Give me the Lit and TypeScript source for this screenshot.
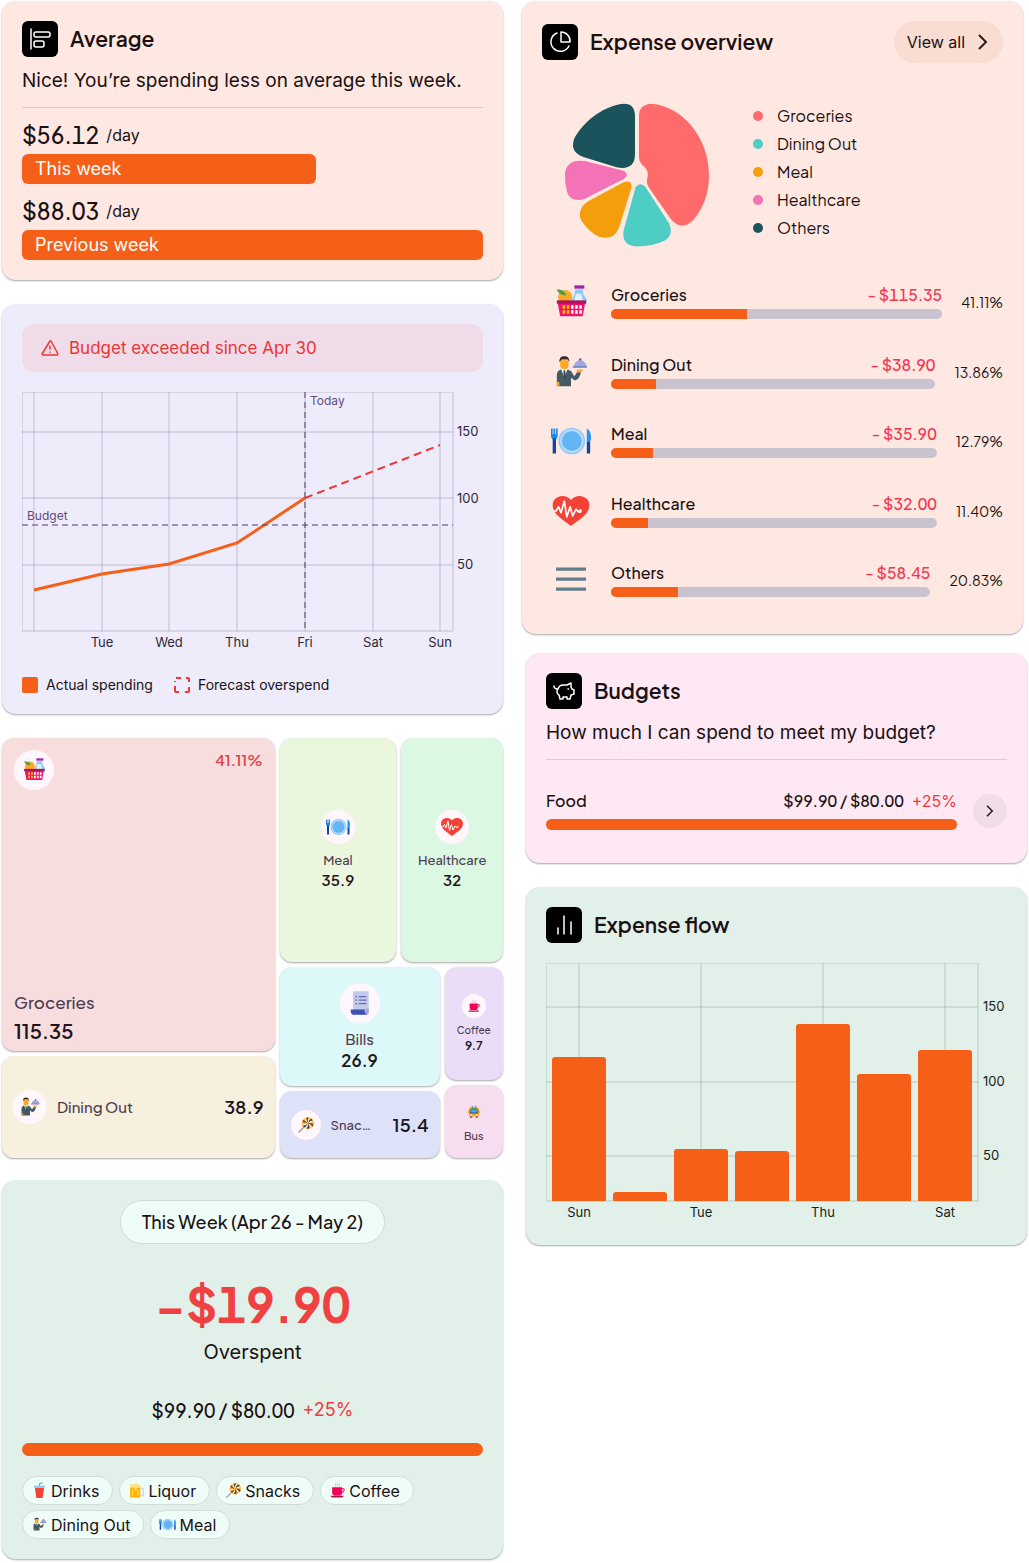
import { css, html, LitElement, svg } from "lit";
import { customElement, property, state } from "lit/decorators.js";
import { map } from "lit/directives/map.js";
import { styleMap } from "lit/directives/style-map.js";

const icons: Record<string, any> = {
  groceries: svg`
    <path fill="#90caf9" d="M29 9h9l1 6 4 6v5H25v-5l3-6z"/>
    <path fill="#e3f2fd" d="M30 14h6l3 11H27z"/>
    <path fill="#9c27b0" d="M28 4h12v4H28z"/>
    <circle cx="17" cy="18" r="8.500" fill="#ffa726"/>
    <path fill="#43a047" d="M7 9c6 0 10 2 11 7-5 0-9-2-11-7z"/>
    <path fill="#f0146a" d="M8 25h33l-3 16H11z"/>
    <path fill="#ad1457" d="M7 22h35v4H7z"/>
    <path fill="#ffc107" d="M14 28h3v4h-3zM19 28h3v4h-3zM14 34h3v4h-3zM19 34h3v4h-3z"/>
    <path fill="#fff" d="M24 28h3v4h-3zM29 28h3v4h-3zM34 28h3v4h-3zM24 34h3v4h-3zM29 34h3v4h-3zM34 34h3v4h-3z"/>`,
  dining: svg`
    <path fill="#455a64" d="M7 41V28c0-4 2-6 5-7h8c3 1 5 2 6 5l2 3 4-6 4 2c-2 6-4 9-8 9l-4-3v10z"/>
    <path fill="#fff" d="M12 20h8l-4 11z"/>
    <path fill="#37474f" d="M15 22h2l1 8-2 3-1-3z"/>
    <path fill="#ffa726" d="M11 10h10v6c0 3-2 5-5 5s-5-2-5-5zM7 36h3v5H7zM31 21h8l-3 3-5 1z"/>
    <path fill="#3e2723" d="M10 12c0-5 2-7 6-7s6 2 6 7l-2-3h-7z"/>
    <path fill="#9fa8da" d="M27 18c1-5 4-8 8-8s7 3 8 8z"/>
    <circle cx="35" cy="9" r="1.500" fill="#5c6bc0"/>
    <path fill="#7986cb" d="M26 17h17v2H26z"/>`,
  meal: svg`
    <circle cx="25" cy="24" r="16" fill="#90caf9"/>
    <circle cx="25" cy="24" r="14" fill="#bbdefb"/>
    <circle cx="25" cy="24" r="12" fill="#64b5f6"/>
    <path fill="#1e88e5" d="M0 9h2v7h1V9h2v7h1V9h2v9c0 2-1 3-2 4H2c-1-1-2-2-2-4z"/>
    <path fill="#0d47a1" d="M2 21h4v18H2z"/>
    <path fill="#2196f3" d="M43 9c4 2 5 7 5 11 0 3-1 5-2 6h-3z"/>
    <path fill="#0d47a1" d="M43 25h4v14h-4z"/>`,
  health: svg`
    <path fill="#f44336" d="M24 42C12 33 2 27 2 17 2 6 17 2 24 11 31 2 46 6 46 17c0 10-10 16-22 25z"/>
    <path fill="none" stroke="#fff" stroke-width="2" stroke-linejoin="round" d="M3 24h3l3-5 3 7 4-14 3 19 4-12 3 11 4-8 3 3h3"/>
    <circle cx="35" cy="24" r="2" fill="#fff"/>`,
  others: svg`<path fill="#607d8b" d="M6 9h36v4H6zM6 21h36v4H6zM6 33h36v4H6z"/>`,
  bills: svg`
    <path fill="#c5cae9" d="M12 4h27v36c0 2-2 4-5 4H12z"/>
    <path fill="#9fa8da" d="M33 34h6v5c0 3-1 5-4 5z"/>
    <path fill="#3f51b5" d="M8 35h24c0 4 1 7 4 9H13c-4 0-5-4-5-9z"/>
    <path fill="#5c6bc0" d="M16 12h3v2h-3zM16 18h3v2h-3zM16 24h3v2h-3zM22 12h13v2H22zM22 18h13v2H22zM22 24h13v2H22z"/>`,
  coffee: svg`
    <path fill="none" stroke="#bcaaa4" stroke-width="2" d="M18 4c3 3-2 5 0 9M24 4c3 3-2 5 0 9M30 4c3 3-2 5 0 9"/>
    <path fill="#f50057" d="M9 15h28v15c0 5-3 8-8 8H17c-5 0-8-3-8-8z"/>
    <path fill="none" stroke="#f50057" stroke-width="3" d="M36 19h5c3 0 3 9-6 11"/>
    <path fill="#ad1457" d="M4 39h38c-1 3-4 5-7 5H11c-3 0-6-2-7-5z"/>`,
  snacks: svg`
    <path stroke="#a1887f" stroke-width="3" d="M4 44l18-18"/>
    <circle cx="29" cy="19" r="16" fill="#ffa726"/>
    <path fill="#37474f" d="M29 19q-5-6-3-15l5 0q-4 8-2 15zM29 19q1-8 9-12l4 4q-9 1-13 8zM29 19q8-2 15 4l-3 5q-4-7-12-9zM29 19q5 5 3 14l-6 1q4-7 3-15zM29 19q-2 7-9 11l-4-4q8-1 13-7zM29 19q-7 0-14-5l3-4q4 7 11 9z"/>
    <path fill="#fff" d="M29 19q-2-7 3-15l2 1zM29 19q6-6 14-6l1 2zM29 19q8 3 11 10l-2 2zM29 19q1 8-5 14l-2-1zM29 19q-6 5-13 5l-1-2zM29 19q-6-4-9-11l2-2z"/>`,
  bus: svg`
    <path stroke="#546e7a" stroke-width="3" d="M17 2l3 8M31 2l-3 8"/>
    <path fill="#ffa726" d="M7 14c0-4 3-6 6-6h22c3 0 6 2 6 6v25H7zM3 18h4v10H3zM41 18h4v10h-4z"/>
    <path fill="#37474f" d="M11 39h7v5h-7zM30 39h7v5h-7zM10 15h28v14H10z"/>
    <path fill="#43a047" d="M15 9h18v5H15z"/>
    <path fill="#42a5f5" d="M12 17h24v9H12z"/>
    <circle cx="14" cy="34" r="2.500" fill="#fff"/><circle cx="34" cy="34" r="2.500" fill="#fff"/>`,
  drinks: svg`
    <path fill="none" stroke="#42a5f5" stroke-width="3" d="M24 12V5l9-3"/>
    <path fill="#90caf9" d="M9 10h30v7H9z"/>
    <path fill="#f44336" d="M11 17h26l-4 28H15z"/>`,
  liquor: svg`
    <path fill="none" stroke="#bbdefb" stroke-width="4" d="M35 18h8v20h-8"/>
    <path fill="#ffb300" d="M6 12h29v32H6z"/>
    <path fill="#ffe082" d="M5 13C4 6 12 3 16 6c5-4 11-2 12 1 6-1 9 3 7 9H24v8h-5v-8H5z"/>
    <path fill="#ffd54f" d="M11 22h4v17h-4zM26 22h4v17h-4z"/>`,
};

const badges: Record<string, any> = {
  average: svg`<path d="M9 8v20"/><rect x="12" y="11" width="16" height="5" rx="2"/><rect x="12" y="20" width="10" height="6" rx="2"/>`,
  pie: svg`<path d="M15 9a9.500 9.500 0 1 0 12 13"/><path d="M19 8v10h9A9 9 0 0 0 19 8z"/>`,
  piggy: svg`<path d="M8 13c0 2 1 3 4 3 1-3 3-4 5-4h4l4-2v4l1 2 2 1v4l-3 1-1 4h-3v-2h-4v2h-3l-1-4c-2-1-3-4-1-6M22 16h.500"/>`,
  bars: svg`<path d="M12 21v6M18 9v18M25 15v12"/>`,
};

const icon = (name: string) =>
  html`<svg class="icon" viewBox="0 0 48 48" aria-hidden="true">${icons[name]}</svg>`;

const badge = (name: string) =>
  html`<svg class="badge" viewBox="0 0 36 36" aria-hidden="true">${badges[name]}</svg>`;

const chevron = html`<svg class="chevron" viewBox="0 0 16 16" aria-hidden="true"><path d="M4 1l7 7-7 7" /></svg>`;

@customElement("spending-chart")
export class SpendingChart extends LitElement {
  static styles = css`
    :host {
      display: block;
    }
    svg {
      display: block;
      width: 100%;
      height: auto;
      font-family: Inter, sans-serif;
      font-size: 13px;
      fill: #2c2839;
    }
    .grid {
      fill: none;
      stroke: #26203a;
      stroke-opacity: 0.22;
    }
    .marker {
      fill: none;
      stroke: #4f3a70;
      stroke-dasharray: 6 4;
    }
    .note {
      font-size: 12px;
      fill: #5e4b80;
    }
    .actual {
      fill: none;
      stroke: #f65f18;
      stroke-width: 3;
    }
    .forecast {
      fill: none;
      stroke: #ef3535;
      stroke-width: 2;
      stroke-dasharray: 8 5;
    }
    .mid {
      text-anchor: middle;
    }
  `;

  private _days = ["", "Tue", "Wed", "Thu", "Fri", "Sat", "Sun"];

  render() {
    return html`
      <svg viewBox="0 0 461 264" role="img" aria-label="Spending this week">
        <rect class="grid" x="0" y="0" width="431" height="239" />
        <path class="grid" d="M0 40H431M0 106H431M0 173H431" />
        ${map(this._days, (day, i) => {
          const x = 12 + Math.round(i * 67.7);
          return svg`
            <path class="grid" d="M${x} 0V239"/>
            <text class="mid" x=${x} y="255">${day}</text>`;
        })}
        <path class="actual" d="M12 198L80 182 147 172 215 151 283 106" />
        <path class="forecast" d="M283 106L418 53" />
        <path class="marker" d="M0 133H431M283 0V239" />
        <text class="note" x="288" y="13">Today</text>
        <text class="note" x="5" y="128">Budget</text>
        <text x="435" y="44">150</text>
        <text x="435" y="111">100</text>
        <text x="435" y="177">50</text>
      </svg>
    `;
  }
}

@customElement("flow-chart")
export class FlowChart extends LitElement {
  static styles = css`
    :host {
      display: block;
    }
    svg {
      display: block;
      width: 100%;
      height: auto;
      font-family: Inter, sans-serif;
      font-size: 13px;
      fill: #16211d;
    }
    .grid {
      fill: none;
      stroke: #123024;
      stroke-opacity: 0.2;
    }
    .bar {
      fill: #f65f18;
    }
    .mid {
      text-anchor: middle;
    }
  `;

  @property({ type: Array }) heights = [144, 9, 52, 50, 177, 127, 151];

  private _days = ["Sun", "Tue", "Thu", "Sat"];

  render() {
    return html`
      <svg viewBox="0 0 461 262" role="img" aria-label="Expenses by day">
        <rect class="grid" x="0" y="0" width="432" height="238" />
        <path class="grid" d="M0 44H432M0 119H432M0 193H432" />
        ${map(
          this._days,
          (day, i) => svg`
            <path class="grid" d="M${33 + i * 122} 0V238"/>
            <text class="mid" x=${33 + i * 122} y="254">${day}</text>`
        )}
        ${map(this.heights, (h, i) => {
          const x = 6 + i * 61;
          return svg`<path class="bar" d="M${x} 238V${241 - h}q0-3 3-3h48q3 0 3 3V238z"/>`;
        })}
        <text x="437" y="48">150</text>
        <text x="437" y="123">100</text>
        <text x="437" y="197">50</text>
      </svg>
    `;
  }
}

@customElement("app-root")
export class AppRoot extends LitElement {
  static styles = css`
    :host {
      display: block;
      background: #fff;
      color: #1a1112;
      font-family: "Plus Jakarta Sans", Inter, sans-serif;
      font-size: 16px;
      line-height: 20px;
    }
    * {
      box-sizing: border-box;
    }
    h2,
    p,
    ul {
      margin: 0;
      padding: 0;
    }
    ul {
      list-style: none;
    }
    button {
      border: 0;
      padding: 0;
      font: inherit;
      color: inherit;
      cursor: pointer;
    }
    svg {
      display: block;
      flex: none;
    }
    .lead,
    .rate,
    .week,
    .alert,
    .keys,
    .state,
    .over,
    .chip,
    .all {
      font-family: Inter, sans-serif;
    }
    .page {
      display: grid;
      grid-template-columns: 501fr 505fr;
      gap: 19px;
      align-items: start;
      padding: 1px 2px 4px;
    }
    .column {
      display: flex;
      flex-direction: column;
      min-width: 0;
    }
    .card {
      border-radius: 14px;
      padding: 20px;
      box-shadow: 0 1px 2px rgba(0, 0, 0, 0.35);
    }
    .card + .card,
    .treemap {
      margin-top: 24px;
    }
    .peach {
      background: #ffe8e2;
    }
    .lilac {
      background: #eeecfb;
    }
    .pink {
      background: #fee8f3;
    }
    .mint {
      background: #e2f0ea;
    }
    .head {
      display: flex;
      align-items: center;
      gap: 12px;
    }
    .head h2 {
      flex: 1;
      font-size: 21px;
      line-height: 28px;
      font-weight: 600;
    }
    .badge {
      width: 36px;
      height: 36px;
      border-radius: 6px;
      background: #000;
      fill: none;
      stroke: #fff;
      stroke-width: 1.5;
      stroke-linecap: round;
      stroke-linejoin: round;
    }
    .icon {
      width: 40px;
      height: 40px;
    }
    .chevron {
      width: 16px;
      height: 16px;
      fill: none;
      stroke: #2a1a18;
      stroke-width: 2;
    }
    .lead {
      margin-top: 12px;
      padding-bottom: 14px;
      border-bottom: 1px solid rgba(60, 50, 70, 0.16);
      font-size: 19px;
      line-height: 24px;
    }
    .rate {
      display: flex;
      align-items: center;
      gap: 7px;
      height: 30px;
      margin-top: 12px;
      font-size: 16px;
    }
    .rate b {
      font-family: "Plus Jakarta Sans", Inter, sans-serif;
      font-size: 23px;
      font-weight: 500;
      font-variant-numeric: tabular-nums;
    }
    .week {
      margin-top: 4px;
      padding-left: 13px;
      border-radius: 6px;
      background: #f65f18;
      color: #fff;
      font-size: 18px;
      line-height: 30px;
    }
    .alert {
      display: flex;
      align-items: center;
      gap: 9px;
      margin-bottom: 20px;
      padding: 12px 18px;
      border-radius: 12px;
      background: #efdce8;
      color: #ee3434;
      font-size: 17px;
      line-height: 24px;
    }
    .alert svg {
      width: 20px;
      height: 20px;
      fill: none;
      stroke: currentColor;
      stroke-width: 1.5;
      stroke-linecap: round;
      stroke-linejoin: round;
    }
    .keys {
      display: flex;
      gap: 21px;
      margin-top: 20px;
      font-size: 14px;
      line-height: 18px;
    }
    .keys li {
      display: flex;
      align-items: center;
      gap: 8px;
    }
    .keys svg {
      width: 16px;
      height: 16px;
    }
    .treemap {
      height: 420px;
      grid-template-columns: 272fr 223fr;
    }
    .treemap,
    .split {
      display: grid;
      gap: 5px;
      min-width: 0;
      min-height: 0;
    }
    .left {
      grid-template-rows: 313fr 102fr;
    }
    .right {
      grid-template-rows: 224fr 191fr;
    }
    .top {
      grid-template-columns: 116fr 101fr;
    }
    .bottom {
      grid-template-columns: 159fr 58fr;
    }
    .bottom-left {
      grid-template-rows: 119fr 67fr;
    }
    .bottom-right {
      grid-template-rows: 113fr 73fr;
    }
    .tile {
      display: flex;
      flex-direction: column;
      align-items: center;
      justify-content: center;
      min-width: 0;
      min-height: 0;
      padding: 0 11px;
      border-radius: 12px;
      box-shadow: 0 1px 2px rgba(0, 0, 0, 0.35);
      color: #4c3c50;
      font-size: 13px;
      font-weight: 500;
      text-align: center;
    }
    .tile b {
      color: #1d1620;
      font-weight: 600;
      font-size: 15px;
    }
    .tile.wide {
      flex-direction: row;
      justify-content: flex-start;
      gap: 10px;
      font-size: 15px;
    }
    .name {
      flex: 1;
      text-align: left;
      overflow: hidden;
      text-overflow: ellipsis;
      white-space: nowrap;
    }
    .wide b {
      font-size: 18px;
    }
    .tile.snack {
      font-size: 13px;
    }
    .snack .name {
      margin-right: 10px;
    }
    .disc {
      display: grid;
      place-items: center;
      flex: none;
      width: 34px;
      height: 34px;
      border-radius: 50%;
      background: #fff7fb;
      margin-bottom: 6px;
    }
    .disc .icon {
      width: 24px;
      height: 24px;
    }
    .wide .disc {
      margin-bottom: 0;
    }
    .large {
      width: 40px;
      height: 40px;
    }
    .large .icon {
      width: 28px;
      height: 28px;
    }
    .small {
      width: 24px;
      height: 24px;
      margin-bottom: 4px;
    }
    .small .icon {
      width: 14px;
      height: 14px;
    }
    .snack .disc {
      width: 30px;
      height: 30px;
    }
    .snack .icon {
      width: 18px;
      height: 18px;
    }
    .tile.hero {
      align-items: stretch;
      justify-content: space-between;
      padding: 12px 12px 5px;
      text-align: left;
      font-size: 17px;
      line-height: 28px;
    }
    .hero div {
      display: flex;
      justify-content: space-between;
    }
    .hero em {
      color: #dc4646;
      font-style: normal;
      font-size: 15px;
      font-weight: 600;
      line-height: 20px;
    }
    .hero b {
      display: block;
      font-size: 20px;
      line-height: 30px;
    }
    .tile.bill {
      font-size: 15px;
    }
    .bill b {
      font-size: 17px;
      line-height: 22px;
    }
    .tile.tiny {
      padding: 0 4px;
      font-size: 10px;
      line-height: 16px;
    }
    .tiny b {
      font-size: 12px;
    }
    .tile.bus {
      font-size: 11px;
    }
    .bus .disc {
      background: none;
    }
    .card.summary {
      display: flex;
      flex-direction: column;
      align-items: center;
      margin-top: 22px;
    }
    .period {
      height: 44px;
      padding: 0 21px;
      border: 1px solid #cfdcda;
      border-radius: 22px;
      background: #effdf9;
      font-size: 18px;
      font-weight: 500;
    }
    .total {
      margin-top: 28px;
      color: #f04142;
      font-size: 48px;
      line-height: 64px;
      font-weight: 700;
      font-variant-numeric: tabular-nums;
    }
    .state {
      margin-top: 4px;
      font-size: 20px;
      line-height: 24px;
    }
    .spent {
      display: flex;
      gap: 4px;
      margin-top: 34px;
      font-size: 19px;
      line-height: 24px;
    }
    .spent,
    .budget p {
      font-variant-numeric: tabular-nums;
      font-weight: 500;
    }
    .over {
      margin-left: 4px;
      color: #ef3b3f;
      font-weight: 400;
      font-variant-numeric: normal;
    }
    .spent .over {
      font-size: 18px;
    }
    .fill {
      align-self: stretch;
      height: 13px;
      margin-top: 21px;
      border-radius: 7px;
      background: #f65f18;
    }
    .chips {
      align-self: stretch;
      display: flex;
      flex-wrap: wrap;
      gap: 5px 6px;
      margin-top: 20px;
    }
    .chip {
      display: flex;
      align-items: center;
      gap: 3px;
      height: 29px;
      padding: 0 13px 0 8px;
      border: 1px solid #cfdcda;
      border-radius: 15px;
      background: #effdf9;
      font-size: 16px;
    }
    .chip .icon {
      width: 17px;
      height: 17px;
    }
    .overview {
      margin-right: 4px;
      padding-bottom: 34px;
    }
    .card.budgets {
      margin-top: 19px;
      padding-bottom: 33px;
    }
    .budgets,
    .flow {
      margin-left: 4px;
    }
    .all {
      display: flex;
      align-items: center;
      gap: 10px;
      height: 42px;
      padding: 0 12px 0 13px;
      border-radius: 21px;
      background: #f9ddd2;
    }
    .share {
      display: flex;
      gap: 42px;
      margin-top: 37px;
      padding-left: 21px;
    }
    .share svg {
      width: 148px;
      height: 148px;
    }
    .share li {
      display: flex;
      align-items: center;
      gap: 14px;
      line-height: 28px;
    }
    .share ul {
      padding-top: 2px;
    }
    .dot {
      width: 10px;
      height: 10px;
      border-radius: 50%;
    }
    .list {
      display: flex;
      flex-direction: column;
      justify-content: space-between;
      height: 318px;
      margin-top: 34px;
      padding-left: 9px;
    }
    .list li {
      display: flex;
      align-items: center;
    }
    .usage {
      flex: 1;
      margin: 0 19px 0 20px;
    }
    .names {
      display: flex;
      justify-content: space-between;
      margin-bottom: 4px;
      font-weight: 500;
    }
    .names span:last-child {
      color: #f4364f;
      font-variant-numeric: tabular-nums;
    }
    .track {
      height: 10px;
      border-radius: 5px;
      overflow: hidden;
      background: #c9c3d0;
    }
    .track div {
      height: 100%;
      background: #f65f18;
    }
    .percent {
      font-size: 14px;
    }
    .budget {
      display: flex;
      align-items: center;
      gap: 16px;
      margin-top: 31px;
    }
    .budget > div {
      flex: 1;
    }
    .budget p {
      display: flex;
      gap: 4px;
    }
    .budget p span:first-child {
      flex: 1;
    }
    .budget .fill {
      height: 11px;
      margin-top: 8px;
    }
    .next {
      display: grid;
      place-items: center;
      width: 34px;
      height: 34px;
      border-radius: 50%;
      background: #f0dde8;
    }
    .next .chevron {
      width: 12px;
      height: 12px;
    }
    .flow flow-chart {
      margin-top: 20px;
    }
  `;

  @state()
  private _categories = [
    { name: "Groceries", icon: "groceries", color: "#ff6b6b", amount: "115.35", share: 41.11 },
    { name: "Dining Out", icon: "dining", color: "#4ecdc4", amount: "38.90", share: 13.86 },
    { name: "Meal", icon: "meal", color: "#f59e0b", amount: "35.90", share: 12.79 },
    { name: "Healthcare", icon: "health", color: "#f472b6", amount: "32.00", share: 11.4 },
    { name: "Others", icon: "others", color: "#1a535c", amount: "58.45", share: 20.83 },
  ];

  private _chips = [
    ["drinks", "Drinks"],
    ["liquor", "Liquor"],
    ["snacks", "Snacks"],
    ["coffee", "Coffee"],
    ["dining", "Dining Out"],
    ["meal", "Meal"],
  ];

  private _weeks = [
    { label: "This week", amount: "$56.12", width: 63.75 },
    { label: "Previous week", amount: "$88.03", width: 100 },
  ];

  tint(background: string) {
    return styleMap({ background });
  }

  renderAverage() {
    return html`
      <section class="card peach">
        <header class="head">${badge("average")}<h2>Average</h2></header>
        <p class="lead">Nice! You’re spending less on average this week.</p>
        ${map(
          this._weeks,
          (w) => html`
            <p class="rate"><b>${w.amount}</b> /day</p>
            <div class="week" style=${styleMap({ width: `${w.width}%` })}>${w.label}</div>
          `
        )}
      </section>
    `;
  }

  renderForecast() {
    return html`
      <section class="card lilac">
        <p class="alert" role="alert">
          <svg viewBox="0 0 20 20">
            <path d="M10 3L2 16q0 1 1 1h14q1 0 1-1L11 3q-.5-.5-1 0zM10 8v3M10 14v.200" />
          </svg>
          Budget exceeded since Apr 30
        </p>
        <spending-chart></spending-chart>
        <ul class="keys">
          <li><svg viewBox="0 0 16 16"><rect width="16" height="16" rx="2" fill="#f65f18" /></svg>Actual spending</li>
          <li>
            <svg viewBox="0 0 16 16" fill="none" stroke="#ef3535" stroke-width="2">
              <path d="M1 9v5q0 1 1 1h3M2 1h5M12 1h2q1 0 1 1v3M15 10v4q0 1-1 1h-3M1 4v1" />
            </svg>
            Forecast overspend
          </li>
        </ul>
      </section>
    `;
  }

  renderTreemap() {
    return html`
      <section class="treemap" aria-label="Spending by category">
        <div class="split left">
          <div class="tile hero" style=${this.tint("#f8dddf")}>
            <div><span class="disc large">${icon("groceries")}</span><em>41.11%</em></div>
            <p>Groceries<b>115.35</b></p>
          </div>
          <div class="tile wide" style=${this.tint("#f8f0de")}>
            <span class="disc">${icon("dining")}</span><span class="name">Dining Out</span><b>38.9</b>
          </div>
        </div>
        <div class="split right">
          <div class="split top">
            <div class="tile" style=${this.tint("#eaf6dd")}>
              <span class="disc">${icon("meal")}</span>Meal<b>35.9</b>
            </div>
            <div class="tile" style=${this.tint("#dcf8e2")}>
              <span class="disc">${icon("health")}</span>Healthcare<b>32</b>
            </div>
          </div>
          <div class="split bottom">
            <div class="split bottom-left">
              <div class="tile bill" style=${this.tint("#dcf8f9")}>
                <span class="disc large">${icon("bills")}</span>Bills<b>26.9</b>
              </div>
              <div class="tile wide snack" style=${this.tint("#dee2f8")}>
                <span class="disc">${icon("snacks")}</span><span class="name">Snac…</span><b>15.4</b>
              </div>
            </div>
            <div class="split bottom-right">
              <div class="tile tiny" style=${this.tint("#eaddf8")}>
                <span class="disc small">${icon("coffee")}</span>Coffee<b>9.7</b>
              </div>
              <div class="tile tiny bus" style=${this.tint("#f6ddef")}>
                <span class="disc small">${icon("bus")}</span>Bus
              </div>
            </div>
          </div>
        </div>
      </section>
    `;
  }

  renderSummary() {
    return html`
      <section class="card mint summary">
        <button class="period">This Week (Apr 26 - May 2)</button>
        <p class="total">−$19.90</p>
        <p class="state">Overspent</p>
        <p class="spent">$99.90 / $80.00 <span class="over">+25%</span></p>
        <div class="fill"></div>
        <ul class="chips">
          ${map(this._chips, ([name, label]) => html`<li class="chip">${icon(name)}${label}</li>`)}
        </ul>
      </section>
    `;
  }

  renderOverview() {
    return html`
      <section class="card peach overview">
        <header class="head">
          ${badge("pie")}
          <h2>Expense overview</h2>
          <button class="all">View all ${chevron}</button>
        </header>
        <div class="share">
          <svg viewBox="144 300 444 444" role="img" aria-label="Share by category">
            <path fill="#ff6b6b" d="M372 348Q372 312 410 311C500 318 582 410 582 525C582 580 565 625 535 660Q500 695 468 658L400 560Q394 550 397 535Q402 512 388 500Q372 488 372 470Z" />
            <path fill="#4ecdc4" d="M362 562L326 690Q318 732 358 739Q410 741 448 722Q478 706 462 670L392 562Q375 544 362 562Z" />
            <path fill="#f59e0b" d="M327 546L222 602Q185 625 198 660Q220 695 252 710Q298 724 313 680L350 560Q350 540 327 546Z" />
            <path fill="#f472b6" d="M328 513L210 483Q155 476 150 520Q149 550 156 575Q166 608 208 597L325 538Q345 524 328 513Z" />
            <path fill="#1a535c" d="M360 350Q360 306 318 312C260 322 205 365 178 415Q162 455 205 471L305 502Q358 512 360 465Z" />
          </svg>
          <ul>
            ${map(
              this._categories,
              (c) => html`<li><span class="dot" style=${this.tint(c.color)}></span>${c.name}</li>`
            )}
          </ul>
        </div>
        <ul class="list">
          ${map(
            this._categories,
            (c) => html`
              <li>
                ${icon(c.icon)}
                <div class="usage">
                  <div class="names"><span>${c.name}</span><span>- $${c.amount}</span></div>
                  <div class="track"><div style=${styleMap({ width: `${c.share}%` })}></div></div>
                </div>
                <span class="percent">${c.share.toFixed(2)}%</span>
              </li>
            `
          )}
        </ul>
      </section>
    `;
  }

  renderBudgets() {
    return html`
      <section class="card pink budgets">
        <header class="head">${badge("piggy")}<h2>Budgets</h2></header>
        <p class="lead">How much I can spend to meet my budget?</p>
        <div class="budget">
          <div>
            <p><span>Food</span><span>$99.90 / $80.00</span><span class="over">+25%</span></p>
            <div class="fill"></div>
          </div>
          <button class="next" aria-label="Open Food budget">${chevron}</button>
        </div>
      </section>
    `;
  }

  render() {
    return html`
      <main class="page">
        <div class="column">
          ${this.renderAverage()} ${this.renderForecast()} ${this.renderTreemap()} ${this.renderSummary()}
        </div>
        <div class="column">
          ${this.renderOverview()} ${this.renderBudgets()}
          <section class="card mint flow">
            <header class="head">${badge("bars")}<h2>Expense flow</h2></header>
            <flow-chart></flow-chart>
          </section>
        </div>
      </main>
    `;
  }
}
